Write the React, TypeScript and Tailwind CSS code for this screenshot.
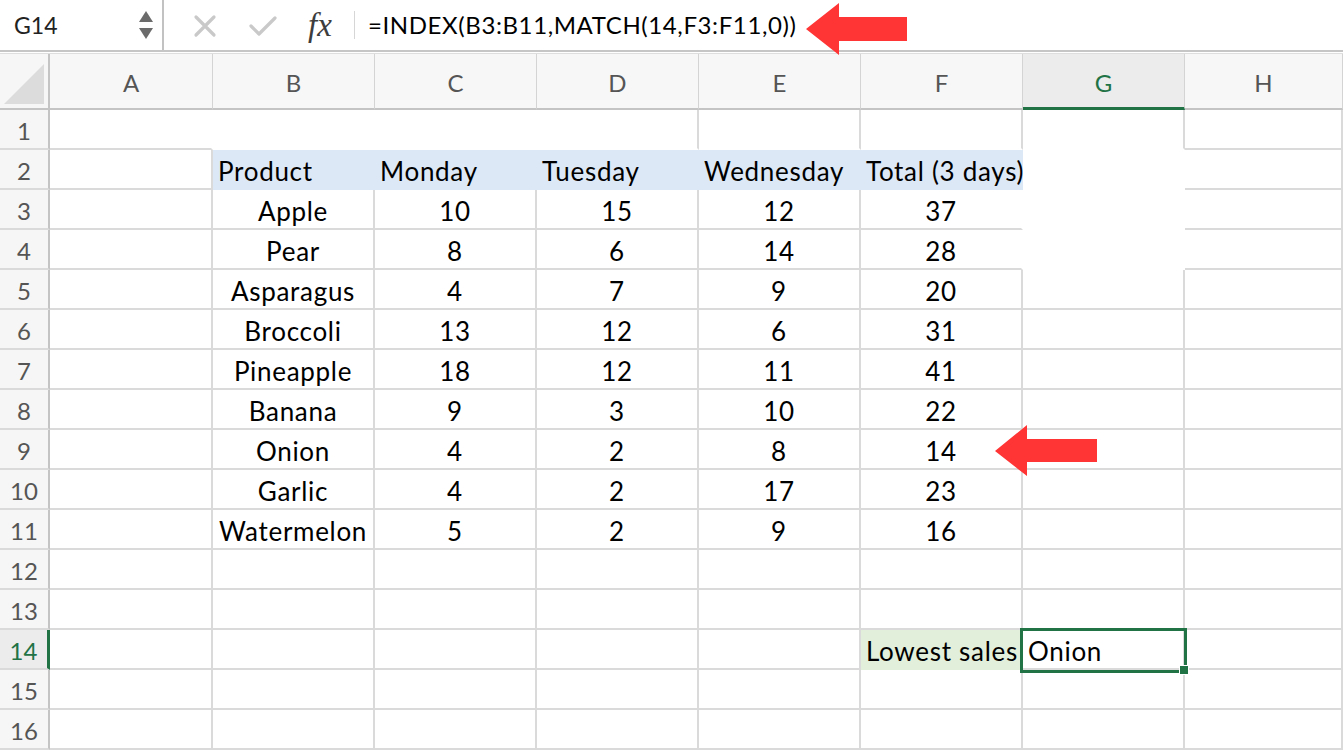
import React from 'react';

type Cell = {
  text?: string;
  left?: boolean;
  bg?: string;
  noR?: boolean;
  noB?: boolean;
  over?: boolean;
};

const COLS = ['A', 'B', 'C', 'D', 'E', 'F', 'G', 'H'];

const products: [string, number, number, number, number][] = [
  ['Apple', 10, 15, 12, 37],
  ['Pear', 8, 6, 14, 28],
  ['Asparagus', 4, 7, 9, 20],
  ['Broccoli', 13, 12, 6, 31],
  ['Pineapple', 18, 12, 11, 41],
  ['Banana', 9, 3, 10, 22],
  ['Onion', 4, 2, 8, 14],
  ['Garlic', 4, 2, 17, 23],
  ['Watermelon', 5, 2, 9, 16],
];

// builds the 16 x 8 sheet, with the odd gridline quirks of the original
function buildSheet(): Cell[][] {
  const rows: Cell[][] = [];
  for (let r = 1; r <= 16; r++) {
    const row: Cell[] = COLS.map(() => ({}));
    if (r === 1) {
      row[0].noR = true;
      row[1].noR = true;
      row[2].noR = true;
      for (let c = 1; c <= 6; c++) row[c].noB = true;
    }
    if (r === 2) {
      const heads = ['Product', 'Monday', 'Tuesday', 'Wednesday', 'Total (3 days)'];
      heads.forEach((h, i) => {
        row[i + 1] = { text: h, left: true, bg: 'blue', noR: true, noB: true, over: i === 4 };
      });
    }
    if (r >= 3 && r <= 11) {
      const p = products[r - 3];
      row[1].text = p[0];
      for (let i = 1; i <= 4; i++) row[i + 1].text = String(p[i]);
    }
    if (r >= 2 && r <= 4) {
      row[6] = { ...row[6], noR: true, noB: true };
      row[5].noR = true;
    }
    if (r === 14) {
      row[5] = { text: 'Lowest sales', left: true, bg: 'green', noR: true, noB: true };
      row[6] = { text: 'Onion', left: true };
    }
    rows.push(row);
  }
  return rows;
}

const sheet = buildSheet();

const SheetCell: React.FC<{ cell: Cell }> = ({ cell }) => {
  const bg =
    cell.bg === 'blue' ? 'bg-[#dde8f6]' : cell.bg === 'green' ? 'bg-[#e2efda]' : 'bg-white';
  return (
    <div
      className={`h-10 border-r-2 border-b-2 flex items-center pt-[4px] text-[26px] tracking-[0.7px] text-black whitespace-nowrap ${bg} ${
        cell.noR ? 'border-r-transparent' : 'border-r-[#dadada]'
      } ${cell.noB ? 'border-b-transparent' : 'border-b-[#dadada]'} ${
        cell.left ? 'justify-start pl-[5px]' : 'justify-center'
      }`}
    >
      {cell.text && <span className={cell.over ? 'relative z-10' : ''}>{cell.text}</span>}
    </div>
  );
};

const App: React.FC = () => {
  return (
    <div className="relative w-[1343px] h-[750px] overflow-hidden bg-white font-['Lato',sans-serif]">
      {/* formula bar */}
      <div className="h-[52px] flex items-center border-b-2 border-[#c6c6c6]">
        <div className="w-[164px] h-full flex items-center justify-between pl-[14px] pr-[9px] border-r-2 border-[#c2c2c2]">
          <span className="text-[23px] text-[#222]">G14</span>
          <div className="flex flex-col gap-[6px]">
            <svg width="14" height="11" viewBox="0 0 14 11"><polygon points="7,0 14,11 0,11" fill="#6b6b6b" /></svg>
            <svg width="14" height="11" viewBox="0 0 14 11"><polygon points="0,0 14,0 7,11" fill="#6b6b6b" /></svg>
          </div>
        </div>
        <div className="w-[190px] h-full flex items-center pl-[29px]">
          <svg width="24" height="24" viewBox="0 0 24 24" className="mt-[2px]">
            <path d="M3 3 L21 21 M21 3 L3 21" stroke="#c9c9c9" strokeWidth="3.2" strokeLinecap="round" />
          </svg>
          <svg width="30" height="24" viewBox="0 0 30 24" className="ml-[31px] mt-[2px]">
            <path d="M3 12 L11 20 L27 4" stroke="#c9c9c9" strokeWidth="3.2" fill="none" strokeLinecap="round" strokeLinejoin="round" />
          </svg>
          <span className="ml-[30px] text-[33px] italic text-[#3d3d3d] font-['Liberation_Serif',serif] leading-none">fx</span>
        </div>
        <div className="w-px h-[28px] bg-[#d6d6d6]" />
        <div className="pl-[13px] text-[24px] text-black tracking-[0.6px]">=INDEX(B3:B11,MATCH(14,F3:F11,0))</div>
      </div>
      <div className="h-px bg-white" />
      <div className="h-px bg-[#dedede]" />

      {/* sheet grid */}
      <div className="grid grid-cols-[50px_163px_162px_162px_162px_162px_162px_162px_1fr]">
        {/* corner */}
        <div className="h-[56px] bg-[#f6f6f6] border-r-2 border-b-2 border-[#c4c4c4] flex items-end justify-end p-[4px]">
          <svg width="40" height="40" viewBox="0 0 40 40"><polygon points="40,0 40,40 0,40" fill="#dcdcdc" /></svg>
        </div>
        {COLS.map((c) => (
          <div
            key={c}
            className={`h-[56px] flex items-center justify-center pt-[4px] text-[24px] border-r ${
              c === 'G'
                ? 'bg-[#ececec] text-[#217346] border-b-[3px] border-b-[#217346] border-r-[#d4d4d4]'
                : 'bg-[#f7f7f7] text-[#555] border-b-2 border-b-[#c4c4c4] border-r-[#d4d4d4]'
            }`}
          >
            {c}
          </div>
        ))}

        {sheet.map((row, ri) => (
          <React.Fragment key={ri}>
            <div
              className={`h-10 flex items-center justify-center pt-[4px] text-[24px] border-b-2 border-b-[#dadada] ${
                ri === 13
                  ? 'bg-[#ececec] text-[#217346] border-r-[3px] border-r-[#217346]'
                  : 'bg-[#f6f6f6] text-[#555] border-r-2 border-r-[#c4c4c4]'
              }`}
            >
              {ri + 1}
            </div>
            {row.map((cell, ci) => (
              <SheetCell key={ci} cell={cell} />
            ))}
          </React.Fragment>
        ))}
      </div>

      {/* selected cell G14 */}
      <div className="absolute left-[1020px] top-[628px] w-[167px] h-[45px] border-[3px] border-[#217346] pointer-events-none" />
      <div className="absolute left-[1179px] top-[665px] w-[10px] h-[10px] bg-[#217346] border border-white" />

      {/* red arrows */}
      <svg className="absolute left-0 top-0 pointer-events-none" width="1343" height="750">
        <polygon points="806,29 839,3 839,17 907,17 907,41 839,41 839,55" fill="#ff3434" />
        <polygon points="995,451 1027,425 1027,439 1097,439 1097,462 1027,462 1027,476" fill="#ff3434" />
      </svg>
    </div>
  );
};

export default App;
